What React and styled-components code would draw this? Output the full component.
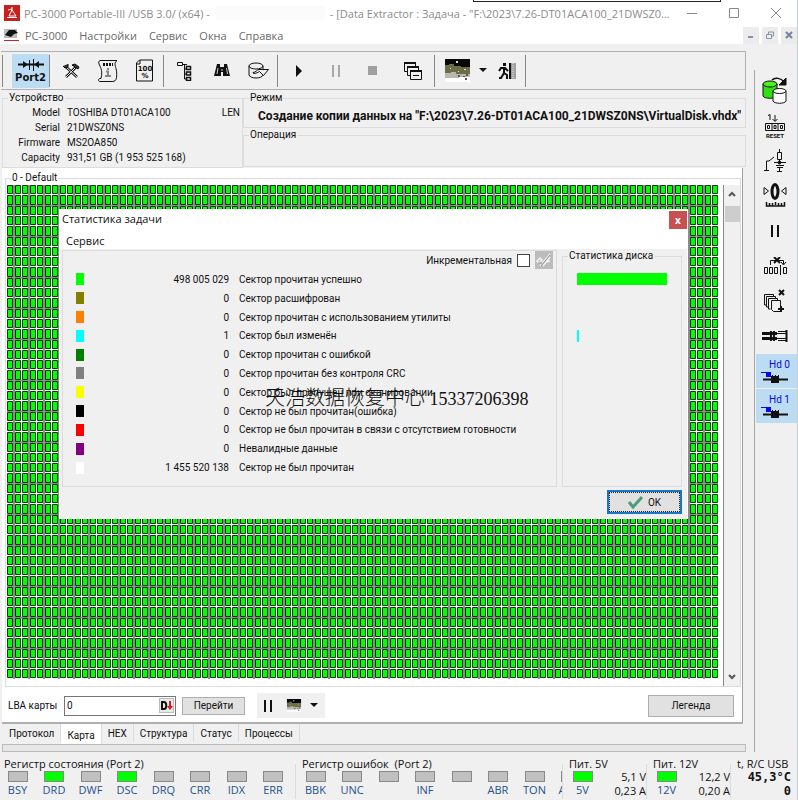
import React, { useState } from 'react';
import styled, { createGlobalStyle } from 'styled-components';

const GlobalStyle = createGlobalStyle`
  * {
    box-sizing: border-box;
  }

  body {
    margin: 0;
    background: #f0f0f0;
    color: #111;
    font-family: Roboto, "Liberation Sans", sans-serif;
    font-size: 10px;
    line-height: 15px;
  }

  button, input {
    font: inherit;
    color: inherit;
  }

  svg {
    display: block;
  }
`;

const uiFont = '"Open Sans", "Noto Sans", sans-serif';

const Window = styled.div`
  position: relative;
  min-height: 100vh;
  display: flex;
  flex-direction: column;
  overflow: hidden;
  border-right: 1px solid #c4ccd4;
`;

const BackEdge = styled.div`
  position: absolute;
  top: 0;
  left: 473px;
  right: 76px;
  height: 2px;
  border: 1px solid #222;
  border-top: 0;
`;

const TitleBar = styled.header`
  display: flex;
  align-items: center;
  height: 26px;
  padding-left: 4px;
  background: #fff;
  color: #8c8c8c;
  font-family: ${uiFont};
`;

const TitleText = styled.h1`
  flex: 1;
  display: flex;
  min-width: 0;
  margin: 0 0 0 4px;
  font-size: 11px;
  font-weight: 400;
  white-space: nowrap;

  span:last-child {
    overflow: hidden;
    text-overflow: ellipsis;
  }
`;

const Redacted = styled.i`
  flex: none;
  width: 112px;
  height: 14px;
  margin: 0 4px;
  border-radius: 6px;
  background: #fbfbfb;
`;

const CaptionButton = styled.button`
  display: flex;
  align-items: center;
  justify-content: center;
  width: 42px;
  height: 24px;
  padding: 0;
  border: 0;
  background: none;
`;

const MenuBar = styled.nav`
  display: flex;
  align-items: center;
  height: 18px;
  padding-left: 4px;
  background: #fff;
  font-family: ${uiFont};
  font-size: 11px;
`;

const MenuLink = styled.a`
  margin-left: ${(p) => (p.$first ? 6 : 12)}px;
  color: #6a6a6a;
  text-decoration: none;
`;

const MdiButtons = styled.div`
  display: flex;
  gap: 3px;
  margin-left: auto;
`;

const MdiButton = styled.button`
  display: flex;
  align-items: center;
  justify-content: center;
  width: 16px;
  height: 17px;
  padding: 0;
  border: 0;
  background: #ececec;
`;

const Main = styled.main`
  display: flex;
`;

const Left = styled.div`
  flex: 1;
  min-width: 0;
  padding: 7px 8px 0 1px;
`;

const Toolbar = styled.div`
  display: flex;
  align-items: center;
  height: 39px;
  padding-left: 1px;
  border: 1px solid #b0b0b0;
  border-left: 0;
`;

const Separator = styled.i`
  flex: none;
  width: 2px;
  height: 32px;
  margin-right: ${(p) => (p.$wide ? 8 : 1)}px;
  border-left: 1px solid #888;
`;

const ToolButton = styled.button`
  display: flex;
  flex-direction: column;
  align-items: center;
  justify-content: center;
  width: ${(p) => p.$width || 37}px;
  height: 34px;
  padding: 0;
  border: 0;
  background: ${(p) => (p.$active ? '#bcdcf4' : 'none')};
  font-family: "DejaVu Sans", sans-serif;
  font-size: 10px;
  font-weight: 700;
  line-height: 11px;
`;

const InfoRow = styled.div`
  display: grid;
  grid-template-columns: 241px 1fr;
  height: 78px;
  padding: 2px 0 0 1px;
`;

const Group = styled.fieldset`
  min-width: 0;
  margin: 0;
  padding: 0;
  border: 1px solid #dcdcdc;
`;

const GroupTitle = styled.legend`
  margin-left: 5px;
  padding: 0 1px;
  line-height: 12px;
`;

const DeviceList = styled.dl`
  display: grid;
  grid-template-columns: 57px 1fr auto;
  column-gap: 7px;
  margin: 0;
  padding-top: 1px;

  dt {
    text-align: right;
  }

  dd {
    margin: 0;
    padding-right: 2px;
  }
`;

const ModeStack = styled.div`
  display: grid;
  grid-template-rows: 36px 38px;
  gap: 1px;
`;

const ModeText = styled.p`
  margin: 0;
  padding: 5px 0 0 14px;
  font-size: 12px;
  font-weight: 700;
  white-space: nowrap;
`;

const MapPage = styled.section`
  position: relative;
  margin: 0 3px 0 1px;
  padding: 4px 1px 0 3px;
  background: #fff;
  border-right: 1px solid #a0a0a0;
  border-bottom: 2px solid #b0b0b0;
`;

const MapBody = styled.div`
  display: flex;
  gap: 5px;
  padding: 1px 0 0 1px;
`;

const MapChart = styled.div`
  flex: 1;
  min-width: 0;
  padding-bottom: 7px;

  svg {
    width: 100%;
    height: auto;
  }
`;

const ScrollTrack = styled.div`
  display: flex;
  flex-direction: column;
  width: 17px;
  border-left: 1px solid #888;
  background: #f0f0f0;
`;

const ScrollButton = styled.button`
  display: flex;
  align-items: center;
  justify-content: center;
  height: 18px;
  padding: 0;
  border: 0;
  background: none;
`;

const ScrollThumb = styled.i`
  height: 16px;
  margin: 3px 0 auto 1px;
  background: #cdcdcd;
`;

const LbaBar = styled.form`
  display: flex;
  align-items: center;
  height: 35px;
  padding: 2px 7px 0 3px;

  label {
    min-width: 51px;
  }
`;

const LbaField = styled.div`
  display: flex;
  align-items: center;
  width: 112px;
  height: 20px;
  margin: 0 6px 0 5px;
  border: 1px solid #777;
  background: #fff;

  input {
    flex: 1;
    min-width: 0;
    padding: 0 2px;
    border: 0;
    outline: 0;
  }

  button {
    display: flex;
    width: 15px;
    height: 15px;
    margin-right: 1px;
    padding: 1px 0 0;
    border: 1px solid #bbb;
    background: #e8e8e8;
  }
`;

const PushButton = styled.button`
  width: ${(p) => p.$width}px;
  height: ${(p) => p.$height}px;
  padding: 0;
  border: 1px solid #adadad;
  background: #e1e1e1;
  line-height: 12px;
`;

const MiniTools = styled.div`
  display: flex;
  align-items: center;
  width: 68px;
  height: 25px;
  margin: 0 auto 0 12px;
  background: #f0f0f0;

  button {
    height: 25px;
  }
`;

const Tabs = styled.div`
  display: flex;
  align-items: flex-start;
  height: 20px;
  margin-left: 2px;
`;

const Tab = styled.button`
  height: ${(p) => (p.$active ? 20 : 18)}px;
  padding: ${(p) => (p.$active ? '3px 6px 0' : '0 6px')};
  border: 0;
  border-right: 1px solid #dcdcdc;
  background: ${(p) => (p.$active ? '#fff' : 'none')};
`;

const ProgressStrip = styled.div`
  height: 8px;
  margin-left: 1px;
  border: 1px solid #bcbcbc;
  background: #e6e6e6;
`;

const Sidebar = styled.aside`
  display: flex;
  flex-direction: column;
  width: 43px;
  margin-top: 26px;
  padding: 4px 0 0 1px;
  border-left: 1px solid #a8a8a8;
`;

const SideButton = styled.button`
  display: flex;
  flex-direction: column;
  align-items: center;
  justify-content: center;
  height: 35px;
  padding: 0 4px 0 0;
  border: 0;
  border-bottom: 1px solid #f0f0f0;
  background: ${(p) => (p.$active ? '#bcdcf4' : 'none')};
  color: #0808e8;
  line-height: 12px;

  span {
    padding-left: 10px;
  }
`;

const Dialog = styled.div`
  position: absolute;
  top: 41px;
  left: 57px;
  right: 54px;
  padding: 0 1px 1px;
  background: #fff;
`;

const DialogTitle = styled.div`
  display: flex;
  justify-content: space-between;
  padding: 2px 0 0 2px;
  font-family: ${uiFont};
  font-size: 11px;

  button {
    width: 18px;
    height: 18px;
    padding: 0;
    border: 0;
    background: #c75050;
    color: #fff;
    font-size: 10px;
    font-weight: 700;
    line-height: 16px;
  }
`;

const DialogMenu = styled.nav`
  height: 20px;
  padding: 4px 0 0 6px;
  font-family: ${uiFont};
  font-size: 11px;

  a {
    color: inherit;
    text-decoration: none;
  }
`;

const DialogBody = styled.div`
  padding: 1px 5px 4px 2px;
  background: #f0f0f0;
`;

const DialogColumns = styled.div`
  display: grid;
  grid-template-columns: 1fr 120px;
  gap: 5px;
  height: 237px;
`;

const StatPanel = styled.div`
  border: 1px solid #dcdcdc;
`;

const Incremental = styled.label`
  display: flex;
  align-items: center;
  justify-content: flex-end;
  gap: 5px;
  height: 18px;
  padding-right: 3px;

  input {
    width: 13px;
    height: 13px;
    margin: 0;
    appearance: none;
    border: 1px solid #444;
    background: #fff;
  }

  input:checked {
    background: #1a76c4;
  }
`;

const StatTable = styled.table`
  width: 100%;
  height: 207px;
  margin-top: 1px;
  border-collapse: collapse;
  table-layout: fixed;

  td {
    padding: 0;
    white-space: nowrap;
  }

  td:nth-child(1) {
    width: 26px;
    padding-left: 13px;
  }

  td:nth-child(2) {
    width: 140px;
    text-align: right;
  }

  td:nth-child(3) {
    padding-left: 10px;
  }
`;

const Swatch = styled.i`
  display: block;
  width: 8px;
  height: 12px;
  background: ${(p) => p.$color};
`;

const DiskChart = styled.div`
  display: grid;
  grid-auto-rows: 1fr;
  align-items: center;
  height: 207px;
  margin: 8px 14px 0;
`;

const Bar = styled.i`
  height: 12px;
  background: ${(p) => p.$color};
`;

const DialogFooter = styled.div`
  display: flex;
  justify-content: flex-end;
  padding-top: 3px;
`;

const OkButton = styled.button`
  display: flex;
  align-items: center;
  justify-content: center;
  gap: 5px;
  width: 75px;
  height: 24px;
  padding: 0;
  border: 2px solid #1a76c4;
  outline: 1px dotted #222;
  outline-offset: -3px;
  background: #e1e1e1;
`;

const Watermark = styled.p`
  position: absolute;
  top: 218px;
  left: 263px;
  margin: 0;
  color: #111;
  font-family: "Liberation Serif", "Noto Sans CJK SC", serif;
  font-size: 18px;
  line-height: 24px;
  white-space: nowrap;

  span {
    font-size: 20px;
    font-weight: 300;
  }
`;

const StatusBar = styled.footer`
  display: grid;
  grid-template-columns: 292px 261px 78px 78px 1fr;
  gap: 6px;
  padding: 5px 6px 0 4px;
  font-family: ${uiFont};
  font-size: 11px;
`;

const StatusGroup = styled.fieldset`
  min-width: 0;
  height: 42px;
  margin: 0;
  padding: 0;
  overflow: hidden;
  border: 0;
  border-right: ${(p) => (p.$last ? 0 : 1)}px solid #dcdcdc;
`;

const StatusTitle = styled.legend`
  padding: 0;
  line-height: 13px;
  white-space: pre;
`;

const Leds = styled.div`
  display: grid;
  grid-template-columns: repeat(8, 1fr);
  width: 292px;
`;

const Led = styled.div`
  display: flex;
  flex-direction: column;
  align-items: center;
  width: 27px;
  padding-top: 1px;
  color: #24508c;

  i {
    width: 20px;
    height: 11px;
    border: 1px solid #888;
    background: ${(p) => (p.$on ? '#00ff00' : '#c0c0c0')};
  }
`;

const Power = styled.div`
  display: flex;
  justify-content: space-between;

  p {
    margin: 0;
    text-align: right;
    line-height: 14px;
  }
`;

const Temperature = styled.p`
  margin: 0;
  text-align: right;
  font-family: "DejaVu Sans Mono", "Liberation Mono", monospace;
  font-size: 12px;
  font-weight: 700;
  line-height: 14px;
`;

const stats = [
  { color: '#00ff00', count: '498 005 029', name: 'Сектор прочитан успешно', share: '100%' },
  { color: '#808000', count: '0', name: 'Сектор расшифрован' },
  { color: '#ff8000', count: '0', name: 'Сектор прочитан с использованием утилиты' },
  { color: '#00ffff', count: '1', name: 'Сектор был изменён', share: '2px' },
  { color: '#008000', count: '0', name: 'Сектор прочитан с ошибкой' },
  { color: '#808080', count: '0', name: 'Сектор прочитан без контроля CRC' },
  { color: '#ffff00', count: '0', name: 'Сектор был пропущен при сканировании' },
  { color: '#000000', count: '0', name: 'Сектор не был прочитан(ошибка)' },
  { color: '#ff0000', count: '0', name: 'Сектор не был прочитан в связи с отсутствием готовности' },
  { color: '#800080', count: '0', name: 'Невалидные данные' },
  { color: '#ffffff', count: '1 455 520 138', name: 'Сектор не был прочитан' },
];

const stateLeds = ['BSY', 'DRD', 'DWF', 'DSC', 'DRQ', 'CRR', 'IDX', 'ERR'];
const errorLeds = ['BBK', 'UNC', '', 'INF', '', 'ABR', 'TON', 'AMN'];

// 95 x 48 blocks, each one snapped to whole units
const COLS = 95;
const ROWS = 48;
const colX = (c) => Math.round(c * 7.5);
const rowY = (r) => Math.round(r * 10.3);

let blocks = '';
let seams = '';
for (let r = 0; r < ROWS; r += 1) {
  const h = rowY(r + 1) - rowY(r) - 2;
  for (let c = 0; c < COLS; c += 1) {
    blocks += `M${colX(c) + 0.5} ${rowY(r) + 0.5}h5v${h}h-5z`;
  }
}
// the wider gaps between columns and rows show grey
for (let c = 1; c < COLS; c += 1) {
  if (colX(c) - colX(c - 1) > 7) {
    seams += `M${colX(c) - 1} 0v494`;
  }
}
for (let r = 1; r < ROWS; r += 1) {
  if (rowY(r) - rowY(r - 1) > 10) {
    seams += `M0 ${rowY(r) - 0.5}h711`;
  }
}

function SectorMap() {
  return (
    <svg viewBox="0 0 711 494" role="img" aria-label="0 - Default">
      <path d={seams} fill="none" stroke="#8c8c8c" strokeWidth="2" />
      <path d={blocks} fill="#00ff00" stroke="#063806" />
    </svg>
  );
}

function Icon({ w = 24, h = 24, children }) {
  return (
    <svg width={w} height={h} viewBox={`0 0 ${w} ${h}`} fill="none" stroke="#111" aria-hidden="true">
      {children}
    </svg>
  );
}

function PhotoIcon({ w = 25, h = 23 }) {
  return (
    <svg width={w} height={h} viewBox="0 0 25 23" aria-hidden="true">
      <path fill="#080808" d="M0 0h25v8H0z" />
      <path fill="#6c6c48" d="M0 6h4v-1h5v2h7v1h9v7H0z" />
      <path fill="#b8b8b0" d="M0 14h6v-1h5v2h14v4H0z" />
      <path fill="#fff" d="M0 19h14v-1h11v5H0z" />
      <path fill="#e0e0c0" d="M11 2h2v2h-2zM5 9h1v1H5zM19 10h2v1h-2zM13 12h1v1h-1z" />
      <path fill="#555" d="M13 16h2v2h-2zM18 17h2v1h-2zM21 15h2v2h-2zM20 19h2v2h-2z" />
    </svg>
  );
}

function Caret() {
  return (
    <Icon w={8} h={5}>
      <path d="M0 0h8L4 4z" fill="#111" stroke="none" />
    </Icon>
  );
}

function PauseIcon({ color = '#111' }) {
  return (
    <Icon w={8} h={12}>
      <path d="M0 0h2v12H0zM6 0h2v12H6z" fill={color} stroke="none" />
    </Icon>
  );
}

function HeadIcon() {
  return (
    <Icon w={27} h={12}>
      <path d="M0 1.5h5" stroke="#0808e8" />
      <path d="M5 1h5v5H5z" fill="#0808e8" stroke="none" />
      <path d="M2 8.5h25" strokeWidth="2" />
      <path d="M10 5h8v7h-8z" fill="#111" stroke="none" />
      <path d="M11.5 4v1M14.5 4v1M17.5 4v1" />
    </Icon>
  );
}

const sideIcons = {
  'Копия диска': (
    <Icon w={26} h={28}>
      <path d="M1 7v12c1 3 13 3 14 0V7" fill="#30e010" />
      <ellipse cx="8" cy="7" rx="7" ry="3" fill="#50f020" />
      <path d="M11 14v10c1 3 12 3 13 0V14" fill="#fff" />
      <ellipse cx="17.5" cy="14" rx="6.5" ry="2.5" fill="#fff" />
      <path d="M10 3c3-3 9-2 12 2" strokeWidth="1.5" />
      <path d="M24 1v7h-7z" fill="#111" />
    </Icon>
  ),
  'Сброс': (
    <Icon w={22} h={26}>
      <path d="M4 2.5l2-1V7M11 2v6M8.5 6l2.5 2.5L13.5 6" />
      <path d="M1.5 10.5h19v7h-19zM8 10v8M14 10v8M3.5 12.5h2v3h-2zM10 12.5h2v3h-2zM16.5 12.5h2v3h-2z" />
      <text x="11" y="25" textAnchor="middle" fontSize="6" fontWeight="700" fontFamily="Roboto" fill="#111" stroke="none">RESET</text>
    </Icon>
  ),
  'Питание': (
    <Icon w={24} h={24}>
      <path d="M1 21.5h5M3.5 21v-9H6L11 8M16.5 0v4M14.5 3.5h4v7h-4zM16.5 10v4M11 13.5h12" />
      <path d="M13 16.5h8M14 18.5h6M16.5 18v5M14 22.5h5" />
      <circle cx="16.5" cy="13.5" r="1.5" fill="#111" />
    </Icon>
  ),
  'Рекалибровка': (
    <Icon w={24} h={26}>
      <ellipse cx="12" cy="8.5" rx="3" ry="7" strokeWidth="3" />
      <path d="M1 4.5v7L5.5 8zM23 4.5v7L18.5 8z" />
      <path d="M3.5 19v4h18v-4M6.5 20v3M9.5 20v3M12.5 19v3M15.5 20v3M18.5 20v3" strokeWidth="1.5" />
    </Icon>
  ),
  'Пауза': <PauseIcon />,
  'Пропуск': (
    <Icon w={24} h={18}>
      <path d="M1.5 10.5h3v6h-3zM6.5 10.5h3v6h-3zM11.5 10.5h3v6h-3zM17.5 8v10M20.5 10.5h3v6h-3z" />
      <path d="M7.5 8V3.5h13V7M18 5l2.5 3L23 5" />
      <path d="M11 0l6 6M17 0l-6 6" strokeWidth="2" />
    </Icon>
  ),
  'Копировать карту': (
    <Icon w={24} h={24}>
      <path d="M1.5 16V5.5h9V8M3.5 18V7.5h9V10M5.5 20V9.5h9V12" />
      <path d="M1.5 16h2M3.5 18h2M5.5 20h2" />
      <path d="M8.5 11.5h9v11h-7l-2-2z" fill="#f0f0f0" />
      <path d="M16 1l5 5M21 1l-5 5" strokeWidth="2" />
      <path d="M18 17v6M15 20h6" strokeWidth="2" />
    </Icon>
  ),
  'Разъём': (
    <Icon w={26} h={14}>
      <path d="M0 4.5h15M0 9.5h15" strokeWidth="3" />
      <path d="M9 2v10M12 2v10" strokeWidth="2" />
      <path d="M15 4.5h10M15 9.5h10M16 2.5h8M16 11.5h8" />
      <path d="M24.5 1v12" strokeWidth="2" />
    </Icon>
  ),
};

function MainToolbar() {
  return (
    <Toolbar>
      <Separator $wide />
      <ToolButton $active>
        <Icon w={26} h={14}>
          <path d="M0 6.5h26" strokeWidth="2" />
          <path d="M5 3l5 3.5L5 10zM21 3l-5 3.5 5 3.5z" fill="#111" stroke="none" />
          <path d="M11.5 2v10M15.5 1v12" />
        </Icon>
        Port2
      </ToolButton>
      <Separator />
      <ToolButton aria-label="Инструменты">
        <Icon w={18} h={18}>
          <path d="M3 4l12 11M14 5L4 15" strokeWidth="2.5" />
          <path d="M4 5l11 10M14 5L4 15" stroke="#eee" />
          <path d="M1 4l2 2 3-1 0-3M10 3l3-1 4 3-1 2-3-2z" fill="#333" />
        </Icon>
      </ToolButton>
      <ToolButton aria-label="Сценарий">
        <Icon w={22} h={24}>
          <path d="M3 1.5h17c-3 2-2 5-1 8s1 9 0 11c-1 2-3 2-4 2H3c-2 0-2-3 0-3h1c1-4 1-7 0-10S0 3 3 1.5z" />
          <path d="M6 5.5h10" strokeWidth="3" strokeDasharray="2 1" />
          <path d="M11 9v2M9 12.5h2v5M8 17h6" stroke="#888" strokeWidth="2" />
        </Icon>
      </ToolButton>
      <ToolButton aria-label="Отчёт">
        <Icon w={19} h={23}>
          <path d="M4.5 1h13v21h-16V4z" />
          <path d="M1 5h4V1" />
          <text x="10" y="12" textAnchor="middle" fontSize="7" fontWeight="700" fontFamily="DejaVu Sans" fill="#111" stroke="none">100</text>
          <text x="10" y="19" textAnchor="middle" fontSize="7" fontWeight="700" fontFamily="DejaVu Sans" fill="#111" stroke="none">%</text>
        </Icon>
      </ToolButton>
      <Separator />
      <ToolButton aria-label="Дерево">
        <Icon w={18} h={20}>
          <path d="M1.5 1.5h5v3h-5zM6 3.5h5M8.5 4v14M8.5 8h2M8.5 13h2M8.5 18h2" />
          <path d="M10.5 5.5h4v3h-4zM10.5 11h4v3h-4zM10.5 16.5h4v3h-4z" strokeWidth="1.5" />
        </Icon>
      </ToolButton>
      <ToolButton aria-label="Поиск">
        <Icon w={16} h={16}>
          <path d="M3 1h3v3h4V1h3l3 12H9V9H7v4H0z" fill="#111" stroke="none" />
          <path d="M4 5l-1 6M12.5 5l1 6M7 7h2" stroke="#ccc" />
        </Icon>
      </ToolButton>
      <ToolButton aria-label="Диск">
        <Icon w={22} h={18}>
          <path d="M1 4v9c1 4 13 4 14 0M15 4v3" />
          <ellipse cx="8" cy="4" rx="7" ry="3" />
          <path d="M5 10.5c3 0 4-3 6-3h9.500l-5 6-4-4c-2 1-3 2-6 2z" fill="#f0f0f0" />
        </Icon>
      </ToolButton>
      <Separator />
      <ToolButton aria-label="Пуск">
        <Icon w={6} h={12}>
          <path d="M0 0l6 6-6 6z" fill="#111" stroke="none" />
        </Icon>
      </ToolButton>
      <ToolButton aria-label="Пауза">
        <PauseIcon color="#a8a8a8" />
      </ToolButton>
      <ToolButton aria-label="Стоп">
        <Icon w={9} h={9}>
          <path d="M0 0h9v9H0z" fill="#a0a0a0" stroke="none" />
        </Icon>
      </ToolButton>
      <ToolButton $width={43} aria-label="Окна">
        <Icon w={20} h={20}>
          {[[1, 1], [4, 5], [7, 9]].map(([x, y]) => (
            <g key={x}>
              <path d={`M${x + 0.5} ${y + 0.5}h11v9h-11z`} fill="#f0f0f0" />
              <path d={`M${x} ${y + 1}h12`} strokeWidth="2" />
            </g>
          ))}
          <path d="M10 14.5h6" />
        </Icon>
      </ToolButton>
      <Separator />
      <ToolButton $width={41} aria-label="Карта">
        <PhotoIcon />
      </ToolButton>
      <ToolButton $width={10} aria-label="Выбор">
        <Caret />
      </ToolButton>
      <ToolButton aria-label="Выход">
        <Icon w={18} h={18}>
          <path d="M5 1h3v3H5z" fill="#111" stroke="none" />
          <path d="M6 5v6l3 2v4M6 11l-3 5H1M1 9l2-3h4l3 3" strokeWidth="2" />
          <path d="M11 1h2v16h-2z" fill="#111" stroke="none" />
          <path d="M13 1h5v16h-5z" fill="#a0a0a0" stroke="none" />
          <path d="M15 1v16" strokeDasharray="1 1" stroke="#eee" />
        </Icon>
      </ToolButton>
      <Separator />
    </Toolbar>
  );
}

function StatsDialog() {
  const [incremental, setIncremental] = useState(false);

  return (
    <Dialog role="dialog" aria-label="Статистика задачи">
      <DialogTitle>
        Статистика задачи
        <button type="button">x</button>
      </DialogTitle>
      <DialogMenu>
        <a href="#service">Сервис</a>
      </DialogMenu>
      <DialogBody>
        <DialogColumns>
          <StatPanel>
            <Incremental>
              Инкрементальная
              <input type="checkbox" checked={incremental} onChange={() => setIncremental(!incremental)} />
              <Icon w={18} h={18}>
                <path d="M0 0h18v18H0z" fill="#bcbcbc" stroke="none" />
                <path d="M2 10l3-3 2 2-3 3zM5 15L15 3M8 15l7-9M11 11l4-1" stroke="#f4f4f4" strokeWidth="1.5" />
                <path d="M6 15l9-11M3 12h4" stroke="#888" />
              </Icon>
            </Incremental>
            <StatTable>
              <tbody>
                {stats.map((row) => (
                  <tr key={row.name}>
                    <td><Swatch $color={row.color} /></td>
                    <td>{row.count}</td>
                    <td>{row.name}</td>
                  </tr>
                ))}
              </tbody>
            </StatTable>
          </StatPanel>
          <Group>
            <GroupTitle>Статистика диска</GroupTitle>
            <DiskChart>
              {stats.map((row) => (
                <Bar key={row.name} $color={row.color} style={{ width: row.share || 0 }} />
              ))}
            </DiskChart>
          </Group>
        </DialogColumns>
        <DialogFooter>
          <OkButton>
            <Icon w={15} h={13}>
              <path d="M1 6l4 5L14 1" stroke="#4c9c7c" strokeWidth="3" />
            </Icon>
            OK
          </OkButton>
        </DialogFooter>
      </DialogBody>
    </Dialog>
  );
}

function LedRow({ names, lit = [] }) {
  return (
    <Leds>
      {names.map((name, i) => (
        <Led key={i} $on={lit.includes(name)}>
          <i />
          {name}
        </Led>
      ))}
    </Leds>
  );
}

function App() {
  const [lba, setLba] = useState('0');
  const [tab, setTab] = useState('Карта');

  return (
    <Window>
      <GlobalStyle />
      <TitleBar>
        <Icon w={16} h={16}>
          <path d="M0 0h16v16H0z" fill="#c8201c" stroke="none" />
          <path d="M3 12.5h10M5 11l3-6 4 6zM8 2v4M4 5l4-1" stroke="#fff" />
        </Icon>
        <TitleText>
          <span>PC-3000 Portable-III /USB 3.0/ (x64) -</span>
          <Redacted />
          <span>- [Data Extractor : Задача - "F:\2023\7.26-DT01ACA100_21DWSZ0NS\VirtualDisk.vhdx"]</span>
        </TitleText>
        <CaptionButton aria-label="Свернуть">
          <Icon w={10} h={10}><path d="M0 5.5h10" stroke="#888" /></Icon>
        </CaptionButton>
        <CaptionButton aria-label="Развернуть">
          <Icon w={10} h={10}><path d="M.5.5h9v9h-9z" stroke="#888" /></Icon>
        </CaptionButton>
        <CaptionButton aria-label="Закрыть">
          <Icon w={10} h={10}><path d="M0 0l10 10M10 0L0 10" stroke="#888" /></Icon>
        </CaptionButton>
      </TitleBar>
      <BackEdge />
      <MenuBar>
        <Icon w={15} h={14}>
          <path d="M0 1h13v9H0z" fill="#bbb" stroke="none" />
          <path d="M1 7l4-5h6l3 3-4 1-3 3z" fill="#111" stroke="none" />
          <path d="M0 12.5h15" stroke="#d02030" />
        </Icon>
        {['PC-3000', 'Настройки', 'Сервис', 'Окна', 'Справка'].map((item, i) => (
          <MenuLink key={item} href="#menu" $first={i === 0}>{item}</MenuLink>
        ))}
        <MdiButtons>
          <MdiButton aria-label="Свернуть окно">
            <Icon w={8} h={8}><path d="M1 6h5" stroke="#8494a8" strokeWidth="2" /></Icon>
          </MdiButton>
          <MdiButton aria-label="Восстановить окно">
            <Icon w={8} h={8}><path d="M2.5 3V1h5v4H6M.5 3.5h5v4h-5z" stroke="#8494a8" /></Icon>
          </MdiButton>
          <MdiButton aria-label="Закрыть окно">
            <Icon w={8} h={8}><path d="M1 1l6 6M7 1L1 7" stroke="#7484a0" strokeWidth="2" /></Icon>
          </MdiButton>
        </MdiButtons>
      </MenuBar>
      <Main>
        <Left>
          <MainToolbar />
          <InfoRow>
            <Group>
              <GroupTitle>Устройство</GroupTitle>
              <DeviceList>
                <dt>Model</dt><dd>TOSHIBA DT01ACA100</dd><dd>LEN</dd>
                <dt>Serial</dt><dd>21DWSZ0NS</dd><dd />
                <dt>Firmware</dt><dd>MS2OA850</dd><dd />
                <dt>Capacity</dt><dd>931,51 GB (1 953 525 168)</dd><dd />
              </DeviceList>
            </Group>
            <ModeStack>
              <Group>
                <GroupTitle>Режим</GroupTitle>
                <ModeText>Создание копии данных на "F:\2023\7.26-DT01ACA100_21DWSZ0NS\VirtualDisk.vhdx"</ModeText>
              </Group>
              <Group>
                <GroupTitle>Операция</GroupTitle>
              </Group>
            </ModeStack>
          </InfoRow>
          <MapPage>
            <Group>
              <GroupTitle>0 - Default</GroupTitle>
              <MapBody>
                <MapChart>
                  <SectorMap />
                </MapChart>
                <ScrollTrack>
                  <ScrollButton aria-label="Вверх">
                    <Icon w={8} h={6}><path d="M1 5l3-3 3 3" stroke="#555" strokeWidth="2" /></Icon>
                  </ScrollButton>
                  <ScrollThumb />
                  <ScrollButton aria-label="Вниз">
                    <Icon w={8} h={6}><path d="M1 1l3 3 3-3" stroke="#555" strokeWidth="2" /></Icon>
                  </ScrollButton>
                </ScrollTrack>
              </MapBody>
            </Group>
            <LbaBar onSubmit={(event) => event.preventDefault()}>
              <label htmlFor="lba">LBA карты</label>
              <LbaField>
                <input id="lba" value={lba} onChange={(event) => setLba(event.target.value)} />
                <button type="button" aria-label="Формат">
                  <Icon w={13} h={11}>
                    <path d="M2 2h2c3 0 3 7 0 7H2z" strokeWidth="2" />
                    <path d="M9 1h2v5h2l-3 4-3-4h2z" fill="#e01818" stroke="none" />
                  </Icon>
                </button>
              </LbaField>
              <PushButton $width={63} $height={18}>Перейти</PushButton>
              <MiniTools>
                <ToolButton type="button" $width={22} aria-label="Пауза карты">
                  <PauseIcon />
                </ToolButton>
                <ToolButton type="button" $width={30} aria-label="Вид карты">
                  <PhotoIcon w={16} h={13} />
                </ToolButton>
                <ToolButton type="button" $width={10} aria-label="Выбор вида">
                  <Caret />
                </ToolButton>
              </MiniTools>
              <PushButton type="button" $width={86} $height={22}>Легенда</PushButton>
            </LbaBar>
            <StatsDialog />
            <Watermark><span>天浩数据恢复中心</span> 15337206398</Watermark>
          </MapPage>
          <Tabs>
            {['Протокол', 'Карта', 'HEX', 'Структура', 'Статус', 'Процессы'].map((name) => (
              <Tab key={name} $active={tab === name} onClick={() => setTab(name)}>{name}</Tab>
            ))}
          </Tabs>
          <ProgressStrip />
        </Left>
        <Sidebar>
          {Object.entries(sideIcons).map(([name, icon]) => (
            <SideButton key={name} aria-label={name}>{icon}</SideButton>
          ))}
          {['Hd 0', 'Hd 1'].map((name) => (
            <SideButton key={name} $active>
              <span>{name}</span>
              <HeadIcon />
            </SideButton>
          ))}
        </Sidebar>
      </Main>
      <StatusBar>
        <StatusGroup>
          <StatusTitle>Регистр состояния (Port 2)</StatusTitle>
          <LedRow names={stateLeds} lit={['DRD', 'DSC']} />
        </StatusGroup>
        <StatusGroup>
          <StatusTitle>{'Регистр ошибок  (Port 2)'}</StatusTitle>
          <LedRow names={errorLeds} />
        </StatusGroup>
        <StatusGroup>
          <StatusTitle>Пит. 5V</StatusTitle>
          <Power>
            <Led $on><i />5V</Led>
            <p>5,1 V<br />0,23 A</p>
          </Power>
        </StatusGroup>
        <StatusGroup>
          <StatusTitle>Пит. 12V</StatusTitle>
          <Power>
            <Led $on><i />12V</Led>
            <p>12,2 V<br />0,20 A</p>
          </Power>
        </StatusGroup>
        <StatusGroup $last>
          <StatusTitle>t, R/C USB</StatusTitle>
          <Temperature>45,3°C<br />0</Temperature>
        </StatusGroup>
      </StatusBar>
    </Window>
  );
}

export default App;
